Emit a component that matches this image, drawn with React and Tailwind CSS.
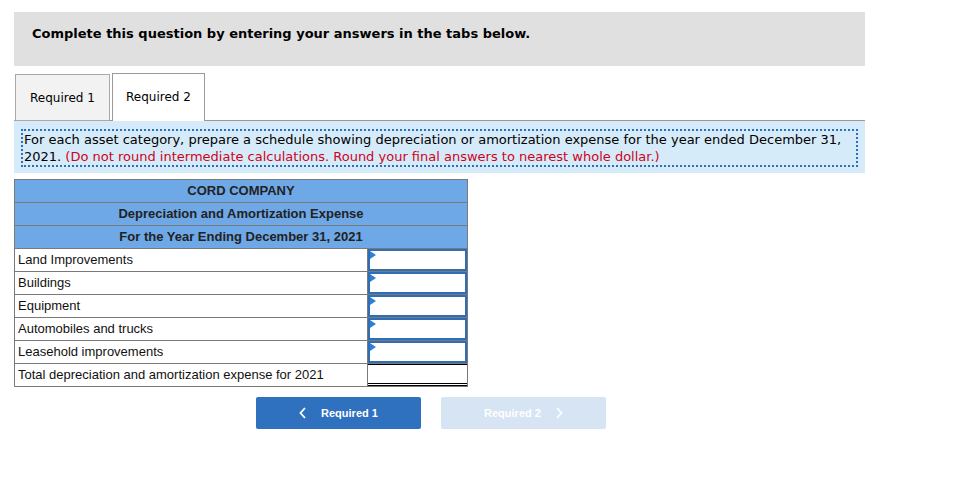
import React from "react";

const rows = [
  "Land Improvements",
  "Buildings",
  "Equipment",
  "Automobiles and trucks",
  "Leasehold improvements",
];

function InputCell() {
  return (
    <td className="w-[100px] border border-[#7a7a7a] p-0">
      <div className="relative h-[22px] border-2 border-[#2f6db5] bg-white">
        <div className="absolute left-0 top-0 h-0 w-0 border-y-[4px] border-l-[6px] border-y-transparent border-l-[#2f7fd6]" />
      </div>
    </td>
  );
}

export default function App() {
  return (
    <div className="min-h-[494px] w-[959px] bg-white pt-3 [font-family:'DejaVu_Sans',Verdana,sans-serif]">
      <div className="ml-[14px] h-[54px] w-[851px] bg-[#e0e0e0] pl-[18px] pt-[14px]">
        <span className="block text-[13px] font-bold leading-[16px] text-black">
          Complete this question by entering your answers in the tabs below.
        </span>
      </div>

      <div className="ml-[14px] mt-[7px] flex w-[851px] items-end border-b border-[#9a9a9a]">
        <div className="mb-[-1px] ml-[1px] flex h-[47px] w-[95px] items-center justify-center border border-[#aaaaaa] bg-[#f2f2f2] text-[12px] text-black">
          Required 1
        </div>
        <div className="mb-[-1px] ml-[2px] flex h-[48px] w-[93px] items-center justify-center border border-b-0 border-[#9a9a9a] bg-white pb-[1px] text-[12px] text-black">
          Required 2
        </div>
      </div>

      <div className="ml-[14px] w-[851px] bg-[#d6ebf9] px-[7px] pb-[6px] pt-[8px]">
        <div className="border-2 border-dotted border-[#2f6db5] px-[1px] text-[13px] leading-[17px] text-black">
          For each asset category, prepare a schedule showing depreciation or amortization expense for the year ended December 31, 2021.{" "}
          <span className="text-[#d0021b]">
            (Do not round intermediate calculations. Round your final answers to nearest whole dollar.)
          </span>
        </div>
      </div>

      <table className="ml-[14px] mt-[6px] w-[454px] border-collapse text-[13px] [font-family:'Liberation_Sans',Arial,sans-serif]">
        <tbody>
          {["CORD COMPANY", "Depreciation and Amortization Expense", "For the Year Ending December 31, 2021"].map((t) => (
            <tr key={t}>
              <td colSpan={2} className="border border-[#7a7a7a] bg-[#6ea8e6] p-0 text-center font-bold text-[#222]">
                <div className="flex h-[22px] items-center justify-center">{t}</div>
              </td>
            </tr>
          ))}
          {rows.map((r) => (
            <tr key={r}>
              <td className="border border-[#7a7a7a] px-[3px] py-0 text-[#111]">
                <div className="flex h-[22px] items-center">{r}</div>
              </td>
              <InputCell />
            </tr>
          ))}
          <tr>
            <td className="border border-[#7a7a7a] px-[3px] py-0 text-[#111]">
              <div className="flex h-[22px] items-center">Total depreciation and amortization expense for 2021</div>
            </td>
            <td className="w-[100px] border border-[#7a7a7a] p-0">
              <div className="h-[22px] border-b-[3px] border-t border-double border-black bg-white" style={{ borderTopStyle: "solid" }} />
            </td>
          </tr>
        </tbody>
      </table>

      <div className="ml-[256px] mt-[10px] flex gap-[20px] [font-family:'Liberation_Sans',Arial,sans-serif]">
        <div className="flex h-[32px] w-[165px] items-center justify-center gap-[14px] rounded-[2px] bg-[#2f70bf] text-[11px] font-bold text-white">
          <svg width="8" height="12" viewBox="0 0 8 12" fill="none" stroke="white" strokeWidth="1.8">
            <path d="M6 1 L1.5 6 L6 11" />
          </svg>
          <span>Required 1</span>
        </div>
        <div className="flex h-[32px] w-[165px] items-center justify-center gap-[14px] rounded-[2px] bg-[#d6e4f3] text-[11px] font-bold text-white">
          <span>Required 2</span>
          <svg width="8" height="12" viewBox="0 0 8 12" fill="none" stroke="white" strokeWidth="1.8">
            <path d="M2 1 L6.5 6 L2 11" />
          </svg>
        </div>
      </div>
    </div>
  );
}
